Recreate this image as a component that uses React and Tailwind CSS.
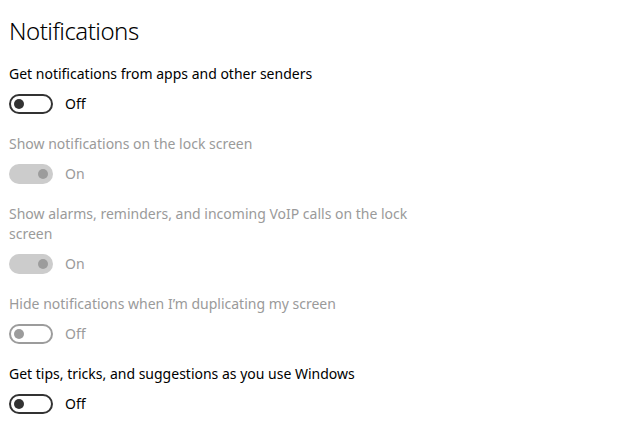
import React from "react";

function Toggle({ on, disabled }) {
  if (on) {
    return (
      <div className="flex h-[20px] w-[44px] items-center justify-end rounded-full bg-[#cccccc] pr-[5px]">
        <div className="h-[10px] w-[10px] rounded-full bg-[#9c9c9c]" />
      </div>
    );
  }
  const c = disabled ? "border-[#9c9c9c]" : "border-[#333333]";
  const k = disabled ? "bg-[#9c9c9c]" : "bg-[#333333]";
  return (
    <div className={`flex h-[20px] w-[44px] items-center rounded-full border-2 ${c} pl-[3px]`}>
      <div className={`h-[10px] w-[10px] rounded-full ${k}`} />
    </div>
  );
}

function Setting({ label, on, disabled }) {
  const tc = disabled ? "text-[#9a9a9a]" : "text-black";
  return (
    <div className="flex flex-col">
      <div className={`max-w-[410px] text-[14px] leading-[20px] ${tc}`}>{label}</div>
      <div className="mt-[10px] flex items-center gap-[12px]">
        <Toggle on={on} disabled={disabled} />
        <span className={`text-[14px] leading-[20px] ${tc}`}>{on ? "On" : "Off"}</span>
      </div>
    </div>
  );
}

export default function App() {
  return (
    <div
      className="min-h-[437px] w-[630px] bg-white pl-[9px] pt-[14px]"
      style={{ fontFamily: '"Noto Sans", "Open Sans", sans-serif' }}
    >
      <h1 className="text-[24px] font-light leading-[34px] tracking-[-0.5px] text-black">Notifications</h1>
      <div className="mt-[16px] flex flex-col gap-[20px]">
        <Setting label="Get notifications from apps and other senders" on={false} />
        <Setting label="Show notifications on the lock screen" on disabled />
        <Setting label="Show alarms, reminders, and incoming VoIP calls on the lock screen" on disabled />
        <Setting label="Hide notifications when I’m duplicating my screen" on={false} disabled />
        <Setting label="Get tips, tricks, and suggestions as you use Windows" on={false} />
      </div>
    </div>
  );
}
